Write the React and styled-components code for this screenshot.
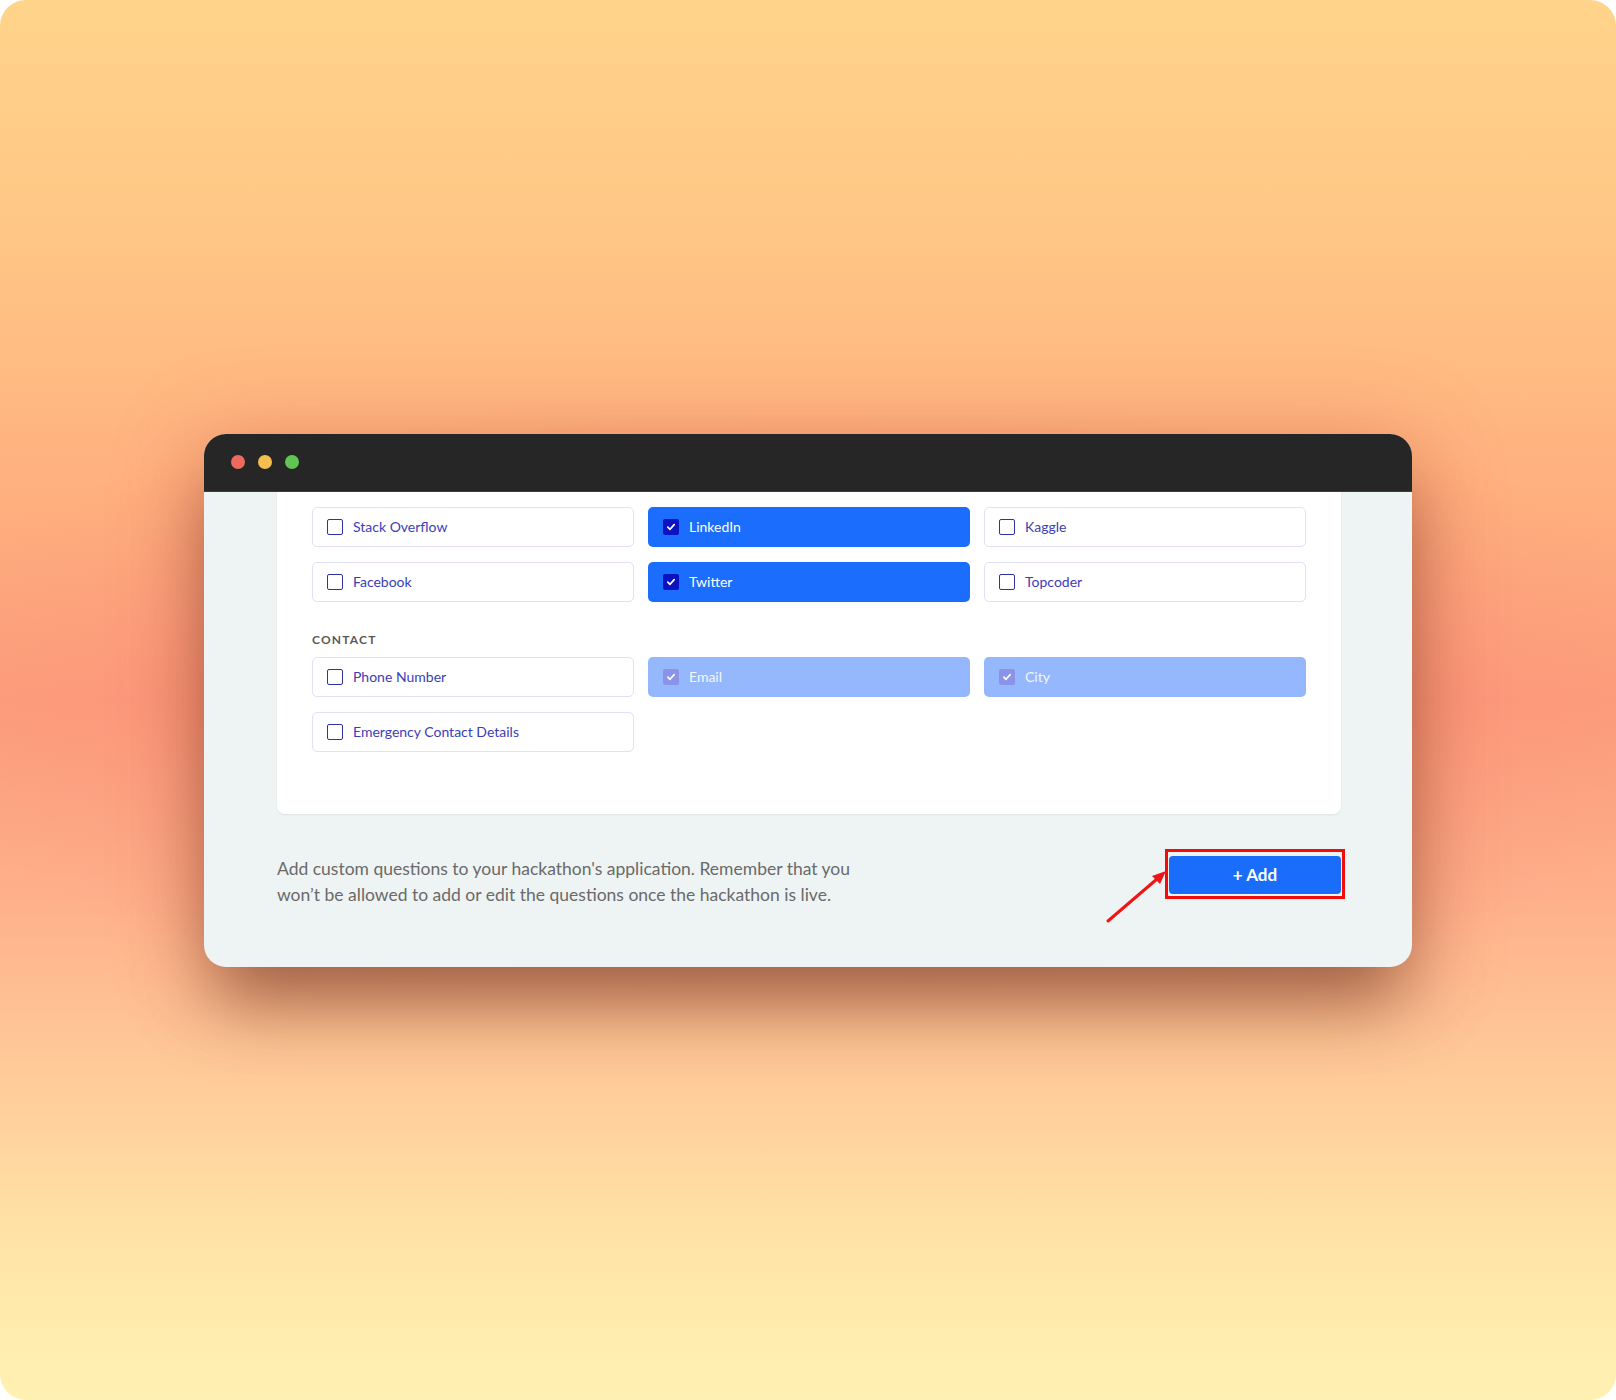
import React from 'react';
import styled, { createGlobalStyle } from 'styled-components';

const sections = [
    {
        title: null,
        items: [
            { label: 'Stack Overflow', state: 'off' },
            { label: 'LinkedIn', state: 'on' },
            { label: 'Kaggle', state: 'off' },
            { label: 'Facebook', state: 'off' },
            { label: 'Twitter', state: 'on' },
            { label: 'Topcoder', state: 'off' }
        ]
    },
    {
        title: 'CONTACT',
        items: [
            { label: 'Phone Number', state: 'off' },
            { label: 'Email', state: 'locked' },
            { label: 'City', state: 'locked' },
            { label: 'Emergency Contact Details', state: 'off' }
        ]
    }
];

const Check = () => (
    <svg width="10" height="10" viewBox="0 0 10 10" fill="none">
        <path d="M1.8 5.2 L4 7.3 L8.2 2.6" stroke="#fff" strokeWidth="1.7" strokeLinecap="round" strokeLinejoin="round" />
    </svg>
);

const Option = ({ label, state }) => (
    <OptionBox $state={state}>
        <Box $state={state}>{state !== 'off' && <Check />}</Box>
        <span>{label}</span>
    </OptionBox>
);

const App = () => {
    return (
        <>
            <GlobalStyle />
            <Page>
                <Window>
                    <TitleBar>
                        <Dot $color="#ec6a5e" />
                        <Dot $color="#f4bf4f" />
                        <Dot $color="#61c554" />
                    </TitleBar>
                    <Content>
                        <Card>
                            {sections.map((section, i) => (
                                <Section key={i}>
                                    {section.title && <SectionTitle>{section.title}</SectionTitle>}
                                    <Grid>
                                        {section.items.map((item) => (
                                            <Option key={item.label} {...item} />
                                        ))}
                                    </Grid>
                                </Section>
                            ))}
                        </Card>
                        <Footer>
                            <Hint>
                                Add custom questions to your hackathon's application. Remember that you
                                <br />
                                won’t be allowed to add or edit the questions once the hackathon is live.
                            </Hint>
                            <ButtonWrap>
                                <Highlight />
                                <Arrow width="70" height="70" viewBox="0 0 70 70">
                                    <line x1="9" y1="59" x2="58" y2="17" stroke="#f01414" strokeWidth="3" strokeLinecap="round" />
                                    <polygon points="67,9 61,22 53,14" fill="#f01414" />
                                </Arrow>
                                <AddButton>+ Add</AddButton>
                            </ButtonWrap>
                        </Footer>
                    </Content>
                </Window>
            </Page>
        </>
    );
};

// ======  STYLES  ======

const GlobalStyle = createGlobalStyle`
    * { box-sizing: border-box; }
    body {
        margin: 0;
        background: #ffffff;
        font-family: Lato, "Noto Sans", sans-serif;
    }
`;

const Page = styled.div`
    width: 1616px;
    height: 1400px;
    border-radius: 26px;
    overflow: hidden;
    display: flex;
    justify-content: center;
    align-items: center;
    background:
        radial-gradient(ellipse 62% 22% at 50% 50%, rgba(248, 120, 110, 0.45), rgba(248, 120, 110, 0) 100%),
        linear-gradient(180deg, #ffd48b 0%, #ffc585 18%, #ffb07f 35%, #fc9e7c 50%, #feb08a 64%, #ffcd9a 78%, #ffe6a8 90%, #fff1b3 100%);
`;

const Window = styled.div`
    width: 1208px;
    height: 533px;
    border-radius: 22px;
    overflow: hidden;
    display: flex;
    flex-direction: column;
    background-color: #eef4f4;
    box-shadow:
        0 45px 70px -10px rgba(80, 35, 15, 0.5),
        0 10px 90px rgba(200, 80, 60, 0.35);
`;

const TitleBar = styled.div`
    height: 58px;
    flex-shrink: 0;
    display: flex;
    align-items: center;
    gap: 13px;
    padding: 0 0 0 27px;
    background-color: #262626;
    border-bottom: 1px solid #3d3d3d;
`;

const Dot = styled.div`
    width: 14px;
    height: 14px;
    border-radius: 50%;
    background-color: ${(p) => p.$color};
`;

const Content = styled.div`
    flex: 1;
    padding: 0 71px 0 73px;
    display: flex;
    flex-direction: column;
`;

const Card = styled.div`
    background-color: #ffffff;
    padding: 15px 35px 62px;
    border-radius: 0 0 8px 8px;
    box-shadow: 0 1px 2px rgba(0, 0, 0, 0.08);
    display: flex;
    flex-direction: column;
    gap: 30px;
`;

const Section = styled.div`
    display: flex;
    flex-direction: column;
`;

const SectionTitle = styled.div`
    font-family: Lato, sans-serif;
    font-size: 12px;
    line-height: 16px;
    font-weight: 700;
    letter-spacing: 1.2px;
    color: #5a5a5a;
    margin-bottom: 9px;
`;

const Grid = styled.div`
    display: grid;
    grid-template-columns: repeat(3, 1fr);
    column-gap: 14px;
    row-gap: 15px;
`;

const OptionBox = styled.div`
    height: 40px;
    display: flex;
    align-items: center;
    padding: 0 14px;
    gap: 10px;
    border-radius: 5px;
    font-size: 14px;
    border: 1px solid ${(p) => (p.$state === 'off' ? '#dfe2f6' : 'transparent')};
    background-color: ${(p) =>
        p.$state === 'on' ? '#1a6dfd' : p.$state === 'locked' ? '#94b8fb' : '#ffffff'};
    color: ${(p) => (p.$state === 'off' ? '#3c3db6' : p.$state === 'on' ? '#ffffff' : '#f2f6ff')};
`;

const Box = styled.div`
    width: 16px;
    height: 16px;
    flex-shrink: 0;
    display: flex;
    align-items: center;
    justify-content: center;
    border-radius: 2px;
    border: ${(p) => (p.$state === 'off' ? '1.5px solid #2f339f' : 'none')};
    background-color: ${(p) =>
        p.$state === 'on' ? '#0b12c2' : p.$state === 'locked' ? '#8a93e8' : 'transparent'};
`;

const Footer = styled.div`
    display: flex;
    justify-content: space-between;
    align-items: flex-start;
    padding-top: 42px;
`;

const Hint = styled.p`
    margin: 0;
    font-size: 17.5px;
    line-height: 26px;
    color: #6a6a6a;
`;

const ButtonWrap = styled.div`
    position: relative;
`;

const Highlight = styled.div`
    position: absolute;
    top: -7px;
    bottom: -5px;
    left: -4px;
    right: -4px;
    border: 3px solid #f20d0d;
    pointer-events: none;
`;

const Arrow = styled.svg`
    position: absolute;
    left: -70px;
    top: 6px;
`;

const AddButton = styled.button`
    position: relative;
    width: 172px;
    height: 38px;
    border: none;
    border-radius: 4px;
    background-color: #1a6dfa;
    color: #ffffff;
    font-family: Lato, sans-serif;
    font-size: 17px;
    font-weight: 700;
    cursor: pointer;
`;

export default App;
